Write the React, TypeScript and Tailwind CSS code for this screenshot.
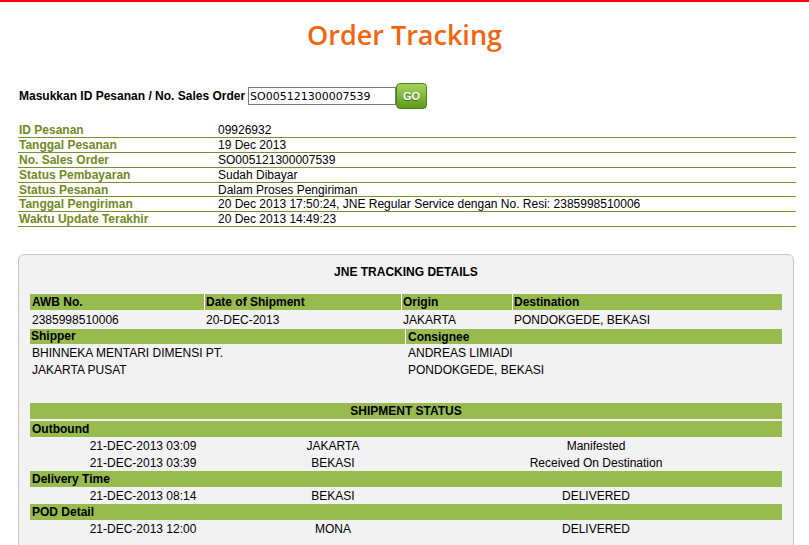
const orderInfo = [
  ["ID Pesanan", "09926932"],
  ["Tanggal Pesanan", "19 Dec 2013"],
  ["No. Sales Order", "SO005121300007539"],
  ["Status Pembayaran", "Sudah Dibayar"],
  ["Status Pesanan", "Dalam Proses Pengiriman"],
  ["Tanggal Pengiriman", "20 Dec 2013 17:50:24, JNE Regular Service dengan No. Resi: 2385998510006"],
  ["Waktu Update Terakhir", "20 Dec 2013 14:49:23"],
];

const statusGroups = [
  {
    title: "Outbound",
    rows: [
      ["21-DEC-2013 03:09", "JAKARTA", "Manifested"],
      ["21-DEC-2013 03:39", "BEKASI", "Received On Destination"],
    ],
  },
  { title: "Delivery Time", rows: [["21-DEC-2013 08:14", "BEKASI", "DELIVERED"]] },
  { title: "POD Detail", rows: [["21-DEC-2013 12:00", "MONA", "DELIVERED"]] },
];

function StatusRow({ row }: { row: string[] }) {
  return (
    <div className="flex h-[17px] items-center">
      <div className="w-[226px] text-center">{row[0]}</div>
      <div className="w-[154px] text-center">{row[1]}</div>
      <div className="flex-1 text-center">{row[2]}</div>
    </div>
  );
}

export default function App() {
  return (
    <div className="min-h-screen bg-white font-['Liberation_Sans',Arial,sans-serif] text-[12px] leading-[14px] text-black">
      <div className="h-[2px] bg-[#ff0000]" />

      <h1 className="mt-[16px] text-center font-['Open_Sans',sans-serif] text-[27px] font-semibold leading-[34px] text-[#f2640f]">
        Order Tracking
      </h1>

      <div className="mt-[31px] flex h-[26px] items-center pl-[19px]">
        <label className="w-[229px] font-bold">Masukkan ID Pesanan / No. Sales Order</label>
        <input
          defaultValue="SO005121300007539"
          className="h-[18px] w-[148px] border border-[#7a7a7a] bg-white px-[1px] font-['DejaVu_Sans',Verdana,sans-serif] text-[11px] text-black outline-none"
        />
        <button className="h-[26px] w-[31px] rounded-[4px] border border-[#4d7f17] bg-gradient-to-b from-[#a8d35d] to-[#5b9b16] text-[11px] font-bold text-white [text-shadow:0_1px_1px_#3d6a10]">
          GO
        </button>
      </div>

      <div className="ml-[18px] mt-[14.5px] w-[778px]">
        {orderInfo.map(([label, value]) => (
          <div key={label} className="flex h-[14.8px] items-center border-b border-[#7e8c34]">
            <div className="w-[200px] pl-[1px] font-bold text-[#708a1e]">{label}</div>
            <div>{value}</div>
          </div>
        ))}
      </div>

      <div className="ml-[18px] mt-[27px] w-[776px] rounded-[6px] border border-[#c5c5c5] bg-[#f2f2f2] px-[11px] pb-[24px] pt-[10px]">
        <div className="text-center font-bold">JNE TRACKING DETAILS</div>

        <div className="mt-[15px] flex h-[16px] items-center bg-[#97bb4f] font-bold">
          <div className="w-[175px] border-r border-white pl-[2px] leading-[16px]">AWB No.</div>
          <div className="w-[197px] border-r border-white pl-[1px] leading-[16px]">Date of Shipment</div>
          <div className="w-[111px] border-r border-white pl-[1px] leading-[16px]">Origin</div>
          <div className="flex-1 pl-[1px]">Destination</div>
        </div>
        <div className="mt-[1px] flex h-[17px] items-center">
          <div className="w-[175px] pl-[2px]">2385998510006</div>
          <div className="w-[197px] pl-[1px]">20-DEC-2013</div>
          <div className="w-[111px] pl-[1px]">JAKARTA</div>
          <div className="flex-1 pl-[1px]">PONDOKGEDE, BEKASI</div>
        </div>

        <div className="mt-[1px] flex h-[15px] items-center bg-[#97bb4f] font-bold">
          <div className="w-[376px] border-r border-white pl-[1px] leading-[15px]">Shipper</div>
          <div className="flex-1 pl-[2px]">Consignee</div>
        </div>
        <div className="flex h-[17px] items-center">
          <div className="w-[376px] pl-[2px]">BHINNEKA MENTARI DIMENSI PT.</div>
          <div className="flex-1 pl-[2px]">ANDREAS LIMIADI</div>
        </div>
        <div className="flex h-[17px] items-center">
          <div className="w-[376px] pl-[2px]">JAKARTA PUSAT</div>
          <div className="flex-1 pl-[2px]">PONDOKGEDE, BEKASI</div>
        </div>

        <div className="mt-[25px] flex h-[16px] items-center justify-center bg-[#97bb4f] font-bold">
          SHIPMENT STATUS
        </div>
        <div className="mt-[2px]">
          {statusGroups.map((group) => (
            <div key={group.title}>
              <div className="flex h-[16px] items-center bg-[#97bb4f] pl-[2px] font-bold">{group.title}</div>
              {group.rows.map((row) => (
                <StatusRow key={row[0]} row={row} />
              ))}
            </div>
          ))}
        </div>
      </div>
    </div>
  );
}
